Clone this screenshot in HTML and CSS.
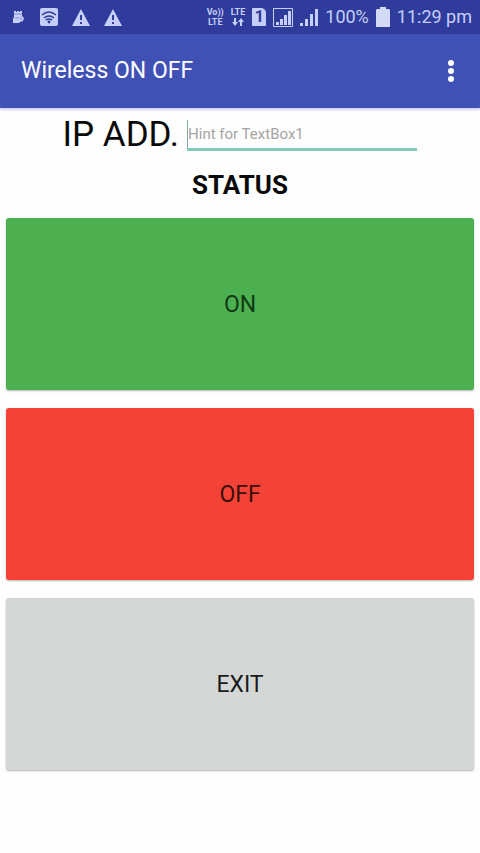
FILE: index.html
```
<!DOCTYPE html>
<html lang="en">
<head>
    <meta charset="UTF-8">
    <meta name="viewport" content="width=device-width, initial-scale=1.0">
    <title>Wireless ON OFF</title>
    <link rel="stylesheet" href="styles.css">
</head>
<body>
    <!-- Status bar -->
    <div class="status-bar">
        <div class="notifications">
            <svg width="14" height="14" viewBox="0 0 14 14">
                <path d="M2 1h2v1h1V1h2v1h1V1h2v5l2 2-1 3-3 1-1 1H1V9l1-2z" fill="#c5cff8"/>
                <path d="M2 4h8M3 8h4M9 7v3" stroke="#7c8bd4" stroke-width="1"/>
            </svg>
            <svg width="18" height="18" viewBox="0 0 18 18">
                <rect width="18" height="18" rx="2" fill="#c5cff8"/>
                <path d="M2 7q7-6 14 0M4 10q5-4 10 0M6 12q3-2 6 0" fill="none" stroke="#303c9c" stroke-width="1.6"/>
                <circle cx="9" cy="14" r="1.4" fill="#303c9c"/>
            </svg>
            <svg width="18" height="17" viewBox="0 0 18 17">
                <path d="M9 0l9 17H0z" fill="#c5cff8"/>
                <path d="M9 6v5M9 13v2" stroke="#303c9c" stroke-width="2"/>
            </svg>
            <svg width="18" height="17" viewBox="0 0 18 17">
                <path d="M9 0l9 17H0z" fill="#c5cff8"/>
                <path d="M9 6v5M9 13v2" stroke="#303c9c" stroke-width="2"/>
            </svg>
        </div>
        <div class="indicators">
            <div class="network"><span>Vo))</span><span>LTE</span></div>
            <div class="network">
                <span>LTE</span>
                <svg width="12" height="8" viewBox="0 0 12 8">
                    <path d="M3 0v6M9 8V2" stroke="#c5cff8" stroke-width="2"/>
                    <path d="M0 4h6L3 8zM6 4h6L9 0z" fill="#c5cff8"/>
                </svg>
            </div>
            <div class="sim">1</div>
            <svg width="20" height="19" viewBox="0 0 20 19">
                <path d="M.5.5h19v18H.5z" fill="none" stroke="#c5cff8"/>
                <path d="M3 17v-3h3v3zM7 17v-6h3v6zM11 17V7h3v10zM15 17V3h3v14z" fill="#c5cff8"/>
            </svg>
            <svg width="18" height="18" viewBox="0 0 18 18">
                <path d="M0 18v-3h3v3zM5 18v-7h3v7zM10 18V6h3v12zM15 18V1h3v17z" fill="#c5cff8"/>
            </svg>
            <span class="percent">100%</span>
            <svg width="14" height="20" viewBox="0 0 14 20">
                <path d="M4 0h6v2h3l1 1v17H0V3l1-1h3z" fill="#d3daf5"/>
            </svg>
            <span class="clock">11:29 pm</span>
        </div>
    </div>

    <!-- Title bar -->
    <header class="title-bar">
        <h1>Wireless ON OFF</h1>
        <button class="menu" type="button" aria-label="More options">
            <svg width="6" height="22" viewBox="0 0 6 22">
                <circle cx="3" cy="3" r="3" fill="#fff"/>
                <circle cx="3" cy="11" r="3" fill="#fff"/>
                <circle cx="3" cy="19" r="3" fill="#fff"/>
            </svg>
        </button>
    </header>

    <main>
        <div class="address">
            <label for="ip">IP ADD.</label>
            <div class="field">
                <input type="text" id="ip" placeholder="Hint for TextBox1">
            </div>
        </div>
        <p class="status">STATUS</p>
        <div class="buttons">
            <button class="on" type="button">ON</button>
            <button class="off" type="button">OFF</button>
            <button class="exit" type="button">EXIT</button>
        </div>
    </main>
</body>
</html>
```
FILE: styles.css
```
* {
    box-sizing: border-box;
}
body {
    margin: 0;
    background-color: #fefefe;
    color: #0a0a0a;
    font-family: Roboto, sans-serif;
}
button, input {
    font-family: inherit;
}
svg {
    display: block;
    flex: none;
}

/* Status bar */
.status-bar {
    display: flex;
    justify-content: space-between;
    align-items: center;
    height: 34px;
    padding: 0 8px 0 12px;
    background-color: #303c9c;
    color: #c5cff8;
}
.notifications {
    display: flex;
    align-items: center;
    gap: 14px;
}
.indicators {
    display: flex;
    align-items: center;
    gap: 7px;
    white-space: nowrap;
}
.network {
    display: flex;
    flex-direction: column;
    align-items: center;
    gap: 1px;
    font-size: 9px;
    font-weight: bold;
    line-height: 9px;
}
.sim {
    width: 14px;
    height: 18px;
    border-radius: 1px 5px 1px 1px;
    background-color: #c5cff8;
    color: #303c9c;
    font-size: 16px;
    font-weight: bold;
    line-height: 18px;
    text-align: center;
}
.percent, .clock {
    font-size: 18px;
    line-height: 24px;
}

/* Title bar */
.title-bar {
    display: flex;
    justify-content: space-between;
    align-items: center;
    height: 74px;
    padding: 0 18px 0 21px;
    background-color: #3f51b5;
    box-shadow: 0 2px 2px #d0d3ea;
}
h1 {
    margin: 0;
    color: #fff;
    font-size: 23px;
    font-weight: normal;
    line-height: 32px;
}
.menu {
    padding: 8px;
    border: none;
    background: none;
    cursor: pointer;
}

.address {
    display: flex;
    justify-content: center;
    align-items: center;
    gap: 8px;
    padding-top: 5px;
}
.address label {
    font-size: 35px;
    line-height: 44px;
}
.field {
    width: 48%;
    border-bottom: 3px solid #80cbb8;
}
.field input {
    display: block;
    width: 100%;
    height: 28px;
    padding: 0;
    border: none;
    border-left: 1px solid #80aaa4;
    outline: none;
    background: none;
    font-size: 15px;
}
.field input::placeholder {
    color: #a4a4a4;
    opacity: 1;
}
.status {
    margin: 8px 0 13px;
    font-size: 26px;
    font-weight: bold;
    line-height: 40px;
    text-align: center;
}

.buttons {
    display: flex;
    flex-direction: column;
    gap: 18px;
    padding: 0 6px 16px;
}
.buttons button {
    height: 172px;
    border: none;
    border-radius: 3px;
    box-shadow: 0 1px 2px rgba(0, 0, 0, 0.3);
    font-size: 23px;
    cursor: pointer;
}
.on {
    background-color: #4caf50;
    color: #103a12;
}
.off {
    background-color: #f44336;
    color: #3a100c;
}
.exit {
    background-color: #d5d7d6;
    color: #1a1a1a;
}
```
